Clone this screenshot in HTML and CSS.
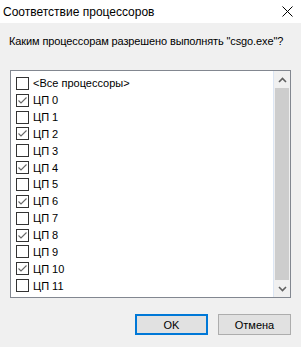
FILE: index.html
```html
<!DOCTYPE html>
<html lang="ru">
<head>
  <meta charset="UTF-8">
  <title>Соответствие процессоров</title>
  <link rel="stylesheet" href="styles.css">
</head>
<body>
  <div class="dialog">
    <div class="titlebar">
      <span class="title">Соответствие процессоров</span>
      <svg class="close" width="11" height="11" viewBox="0 0 11 11">
        <path d="M0.5 0.5 L10.5 10.5 M10.5 0.5 L0.5 10.5" stroke="#000" stroke-width="1" fill="none"/>
      </svg>
    </div>

    <div class="content">
      <p class="prompt">Каким процессорам разрешено выполнять "csgo.exe"?</p>

      <div class="listbox">
        <ul class="cpu-list" id="cpuList"></ul>
        <div class="scrollbar">
          <div class="arrow">
            <svg width="9" height="6" viewBox="0 0 9 6"><path d="M1 5 L4.5 1.5 L8 5" stroke="#606060" stroke-width="1.6" fill="none"/></svg>
          </div>
          <div class="thumb"></div>
          <div class="arrow">
            <svg width="9" height="6" viewBox="0 0 9 6"><path d="M1 1 L4.5 4.5 L8 1" stroke="#606060" stroke-width="1.6" fill="none"/></svg>
          </div>
        </div>
      </div>

      <div class="buttons">
        <button class="btn default">OK</button>
        <button class="btn">Отмена</button>
      </div>
    </div>
  </div>

  <script>
    const items = [{ name: "<Все процессоры>", checked: false }];
    for (let i = 0; i < 12; i++) items.push({ name: "ЦП " + i, checked: i % 2 === 0 });

    const check = '<svg width="11" height="11" viewBox="0 0 11 11"><path d="M1.5 5.5 L4 8 L9.5 2.5" stroke="#666" stroke-width="1.1" fill="none"/></svg>';

    document.getElementById("cpuList").innerHTML = items.map(item => `
      <li class="cpu-item">
        <span class="box">${item.checked ? check : ""}</span>
        <span class="name"></span>
      </li>`).join("");

    document.querySelectorAll(".cpu-item .name").forEach((el, i) => el.textContent = items[i].name);
  </script>
</body>
</html>
```

FILE: styles.css
```css
body { margin: 0; background: #f0f0f0; font-family: "Liberation Sans", Arial, sans-serif; font-size: 11px; color: #000; }
.dialog { width: 301px; height: 347px; }
.titlebar { height: 23px; background: #fff; display: flex; align-items: center; justify-content: space-between; padding: 0 8px 0 3px; }
.title { font-size: 12px; line-height: 16px; }
.close { display: block; }
.content { padding: 0 10px; }
.prompt { margin: 0 0 0 -1px; padding-top: 10px; height: 37px; line-height: 16px; white-space: nowrap; letter-spacing: -0.12px; }
.listbox { width: 281px; height: 228px; box-sizing: border-box; border: 1px solid #828790; background: #fff; display: flex; }
.cpu-list { list-style: none; margin: 0; padding: 4px 0 0 5px; flex: 1; }
.cpu-item { height: 16.85px; display: flex; align-items: center; gap: 4px; }
.box { width: 13px; height: 13px; box-sizing: border-box; border: 1px solid #333; display: flex; align-items: center; justify-content: center; background: #fff; flex-shrink: 0; }
.box svg { display: block; }
.name { line-height: 16px; }
.scrollbar { width: 17px; box-sizing: border-box; border-left: 1px solid #dce6f4; background: #f0f0f0; display: flex; flex-direction: column; }
.arrow { height: 17px; display: flex; align-items: center; justify-content: center; }
.thumb { flex: 1; margin: 0 1px; background: #cdcdcd; }
.buttons { display: flex; justify-content: flex-end; gap: 10px; margin-top: 16px; }
.btn { width: 73px; height: 21px; box-sizing: border-box; border: 1px solid #adadad; background: #e1e1e1; font-family: inherit; font-size: 11px; padding: 0; color: #000; }
.btn.default { border: 2px solid #0078d7; }
```
